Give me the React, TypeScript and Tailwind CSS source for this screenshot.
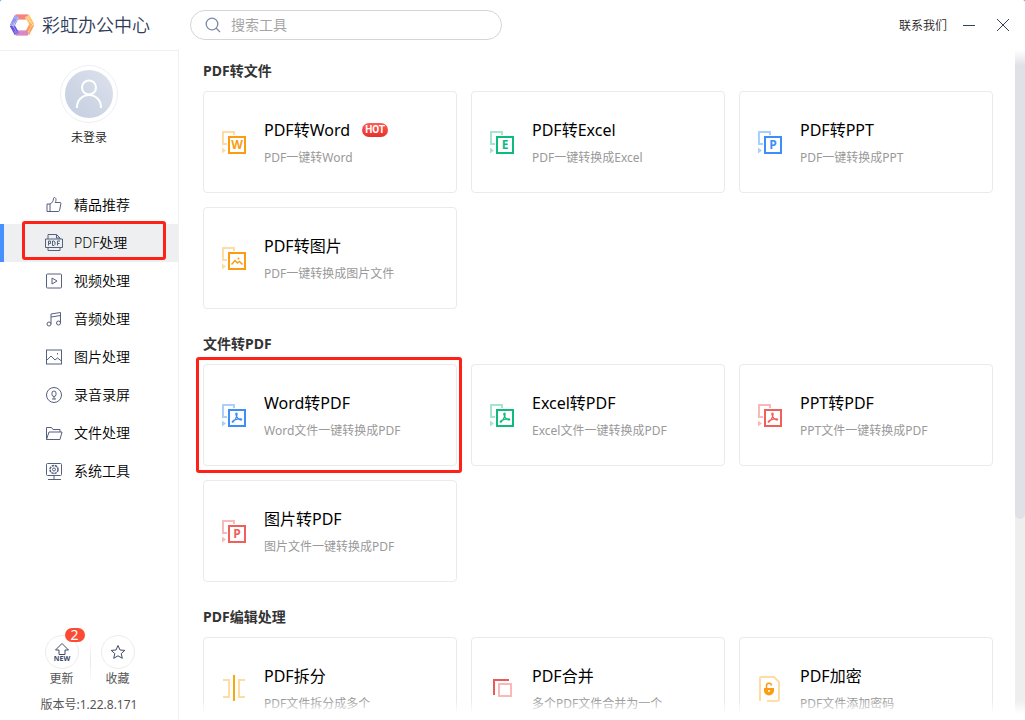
import { useState } from "react";
import type { ReactNode } from "react";

type Tone = "orange" | "green" | "blue" | "red";

interface Tool {
    title: string;
    desc: string;
    icon: ReactNode;
    hot?: boolean;
    marked?: boolean;
}

interface Section {
    title: string;
    tools: Tool[];
}

const tones: Record<Tone, { main: string; light: string }> = {
    orange: { main: "#fb9d14", light: "#ffdca3" },
    green: { main: "#0fbb7c", light: "#a4e6cc" },
    blue: { main: "#3d8ff7", light: "#a9cffb" },
    red: { main: "#f0605a", light: "#f9b9b9" },
};

function ConvertIcon({ tone, children }: { tone: Tone; children: ReactNode }) {
    const { main, light } = tones[tone];
    return (
        <svg width="24" height="24" viewBox="0 0 24 24" fill="none">
            <path d="M5 13H1V1h11v3" stroke={light} strokeWidth="2" />
            <path d="M0 16.500l4 3-4 3z" fill={light} />
            <rect x="7" y="6" width="16" height="16" fill="#fff" stroke={main} strokeWidth="2" />
            {children}
        </svg>
    );
}

function LetterIcon({ tone, letter }: { tone: Tone; letter: string }) {
    return (
        <ConvertIcon tone={tone}>
            <text
                x="15"
                y="18"
                textAnchor="middle"
                fill={tones[tone].main}
                className="font-['Open_Sans',sans-serif] text-[12px] font-bold"
            >
                {letter}
            </text>
        </ConvertIcon>
    );
}

function PdfIcon({ tone }: { tone: Tone }) {
    return (
        <ConvertIcon tone={tone}>
            <path
                d="M14.500 9c.9 0 .7 1.800.1 3.400-.7 1.900-2.200 4.300-3.400 5.500-.6.600-1.200.3-.9-.3.600-1.200 3.200-2.100 5.400-2.500 1.800-.3 4-.4 4 .4 0 .9-2.200.4-3.400-.7-1.200-1-2.300-3.400-2.500-4.700-.1-.7.200-1.100.7-1.100z"
                stroke={tones[tone].main}
                strokeWidth="1.200"
            />
        </ConvertIcon>
    );
}

function PhotoIcon({ tone }: { tone: Tone }) {
    return (
        <ConvertIcon tone={tone}>
            <path d="M9.500 17.500l3.500-4 2.500 2.500 2-1.500 3 3" stroke={tones[tone].main} strokeWidth="1.500" />
            <circle cx="16.500" cy="11.500" r="1" fill={tones[tone].main} />
        </ConvertIcon>
    );
}

function SplitIcon() {
    return (
        <svg width="24" height="28" viewBox="0 0 24 28" fill="none">
            <path d="M1 5h6v17H1M23 5h-6v17h6" stroke="#ffdca3" strokeWidth="2" />
            <path d="M12 0v26" stroke="#f7a90c" strokeWidth="2" />
        </svg>
    );
}

function MergeIcon() {
    return (
        <svg width="24" height="24" viewBox="0 0 24 24" fill="none">
            <path d="M4 18V3h15" stroke="#ed5a56" strokeWidth="2" />
            <rect x="9" y="7" width="12" height="12" stroke="#f9b9b9" strokeWidth="2" />
        </svg>
    );
}

function LockIcon() {
    return (
        <svg width="24" height="26" viewBox="0 0 24 26" fill="none">
            <path d="M2 25V2a1 1 0 0 1 1-1h13l5 5v18a1 1 0 0 1-1 1H9" stroke="#ffdca3" strokeWidth="2" />
            <path d="M6 12h10v2.500a5 5 0 0 1-10 0z" fill="#fb9d14" />
            <path d="M8.500 12.500V10a2.500 2.500 0 0 1 5-.500" stroke="#fb9d14" strokeWidth="1.500" />
            <path d="M11 14v2" stroke="#fff" strokeWidth="1.500" />
        </svg>
    );
}

const sections: Section[] = [
    {
        title: "PDF转文件",
        tools: [
            { title: "PDF转Word", desc: "PDF一键转Word", icon: <LetterIcon tone="orange" letter="W" />, hot: true },
            { title: "PDF转Excel", desc: "PDF一键转换成Excel", icon: <LetterIcon tone="green" letter="E" /> },
            { title: "PDF转PPT", desc: "PDF一键转换成PPT", icon: <LetterIcon tone="blue" letter="P" /> },
            { title: "PDF转图片", desc: "PDF一键转换成图片文件", icon: <PhotoIcon tone="orange" /> },
        ],
    },
    {
        title: "文件转PDF",
        tools: [
            { title: "Word转PDF", desc: "Word文件一键转换成PDF", icon: <PdfIcon tone="blue" />, marked: true },
            { title: "Excel转PDF", desc: "Excel文件一键转换成PDF", icon: <PdfIcon tone="green" /> },
            { title: "PPT转PDF", desc: "PPT文件一键转换成PDF", icon: <PdfIcon tone="red" /> },
            { title: "图片转PDF", desc: "图片文件一键转换成PDF", icon: <LetterIcon tone="red" letter="P" /> },
        ],
    },
    {
        title: "PDF编辑处理",
        tools: [
            { title: "PDF拆分", desc: "PDF文件拆分成多个", icon: <SplitIcon /> },
            { title: "PDF合并", desc: "多个PDF文件合并为一个", icon: <MergeIcon /> },
            { title: "PDF加密", desc: "PDF文件添加密码", icon: <LockIcon /> },
        ],
    },
];

const menu: { label: string; icon: ReactNode }[] = [
    {
        label: "精品推荐",
        icon: <path d="M2 8h3v7.500H2zM5 8c2-.8 3.500-3 3.500-5.500C8.500 1 11 1.300 11 3.500c0 1.300-.4 2.500-.8 3H15c.7 0 1 .5.900 1.100l-1.300 6.700c-.2.800-.6 1.200-1.400 1.200H5" />,
    },
    {
        label: "PDF处理",
        icon: (
            <>
                <path d="M3 5V.5h8.500L15 4v1M11.500.5V4H15M3 13.500v3h12v-3M.5 5h17v8.500H.5z" />
                <path d="M3.500 11.500V7h2v2.500h-2M7.500 7v4.500H9l1-1V8L9 7zM12.500 11.500V7H15M12.500 9.500h2" />
            </>
        ),
    },
    {
        label: "视频处理",
        icon: (
            <>
                <rect x="1.500" y="2" width="15" height="14" rx="1" />
                <path d="M7 6v6l5-3z" />
            </>
        ),
    },
    {
        label: "音频处理",
        icon: (
            <>
                <circle cx="4" cy="14" r="2" />
                <circle cx="13.500" cy="13" r="2" />
                <path d="M6 14V4l9.500-1.500V13M6 7l9.500-1.500" />
            </>
        ),
    },
    {
        label: "图片处理",
        icon: (
            <>
                <rect x="1.500" y="2" width="15" height="14" />
                <path d="M2 12l4-4 4 4 2.500-2 4 3M12.500 5v1.500" />
            </>
        ),
    },
    {
        label: "录音录屏",
        icon: (
            <>
                <circle cx="9" cy="9" r="7.500" />
                <path d="M7 8.500V7a2 2 0 0 1 4 0v1.500a2 2 0 0 1-4 0zM9 10.500V13M7 13h4" />
            </>
        ),
    },
    {
        label: "文件处理",
        icon: <path d="M1.500 15.500v-12h5l1.500 2h7v2.500M1.500 15.500L4 8h13l-2 7.500z" />,
    },
    {
        label: "系统工具",
        icon: (
            <>
                <rect x="1.500" y="1.500" width="15" height="12" rx="1" />
                <path d="M9 13.500v4M3 17.500h13" />
                <circle cx="9" cy="7.500" r="4" strokeWidth="1.500" strokeDasharray="2.500 .7" />
                <circle cx="9" cy="7.500" r="1.500" />
            </>
        ),
    },
];

function Logo() {
    return (
        <svg width="24" height="24" viewBox="0 0 24 24" fill="none" strokeWidth="5">
            <path d="M5.500 4h13" stroke="#f4645d" />
            <path d="M17 3l5 9" stroke="#ffc46b" />
            <path d="M22 11l-5 10" stroke="#ff9d55" />
            <path d="M18 20H6" stroke="#cf6bb4" />
            <path d="M7 21L2 12" stroke="#6a55dc" />
            <path d="M2 13l5-10" stroke="#8f93ea" />
            <path
                d="M5 3h14M4 5h16M4 19h16M5 21h14M1 10l5 8M3 9l5 8M18 5l5 8M16 6l5 8M8 5l-5 8M23 11l-5 8"
                stroke="#fff"
                strokeOpacity=".4"
                strokeWidth="1"
            />
        </svg>
    );
}

function ToolCard({ tool }: { tool: Tool }) {
    return (
        <button className="relative flex h-[102px] items-start rounded border border-[#e9eaeb] px-[18px] pt-[26px] text-left">
            <span className="mt-[3px] flex h-[44px] w-6 shrink-0 items-center">{tool.icon}</span>
            <span className="ml-[18px] min-w-0">
                <span className="flex items-center gap-3 text-base leading-6 text-black">
                    {tool.title}
                    {tool.hot && (
                        <span className="w-[26px] rounded-full bg-linear-to-b from-[#ff5a55] to-[#e4302b] text-center font-['Roboto',sans-serif] text-[10px] leading-[14px] font-bold text-white">
                            HOT
                        </span>
                    )}
                </span>
                <span className="mt-1 block text-xs leading-6 text-[#999]">{tool.desc}</span>
            </span>
            {tool.marked && (
                <span className="pointer-events-none absolute -top-2 -right-1.5 -bottom-2 -left-2 rounded-[3px] border-3 border-[#fd2117]" />
            )}
        </button>
    );
}

export default function App() {
    const [active, setActive] = useState("PDF处理");
    const [keyword, setKeyword] = useState("");

    return (
        <div className="h-screen bg-[#3c9be8] font-['Noto_Sans','Noto_Sans_CJK_SC',sans-serif]">
            <div className="flex h-full rounded-t-xs bg-white">
                <aside className="flex w-[179px] shrink-0 flex-col">
                    <div className="flex h-[51px] items-center gap-2 border-b border-[#f0f0f1] pl-2.5">
                        <Logo />
                        <h1 className="text-lg leading-6 font-[350] text-[#2f3b59]">彩虹办公中心</h1>
                    </div>

                    <div className="flex flex-1 flex-col border-r border-[#f0f0f1] pt-[14px]">
                        <button className="flex flex-col items-center text-xs leading-5 font-[350] text-[#222]">
                            <span className="mb-[5px] flex size-[58px] items-center justify-center rounded-full border border-[#eceff7]">
                                <span className="flex size-12 items-center justify-center rounded-full bg-linear-to-bl from-[#dde1ec] to-[#c3cedf]">
                                    <svg width="28" height="30" viewBox="0 0 28 30" fill="none" stroke="#fff" strokeWidth="2">
                                        <circle cx="14" cy="8.500" r="7" />
                                        <path d="M2 29v-1a12 12 0 0 1 24 0v1" />
                                    </svg>
                                </span>
                            </span>
                            未登录
                        </button>

                        <nav className="mt-[38px] flex flex-col">
                            {menu.map((item) => (
                                <button
                                    key={item.label}
                                    onClick={() => setActive(item.label)}
                                    className={`relative flex h-[38px] items-center gap-[11px] border-l-4 pl-[41px] text-sm font-[350] text-black ${item.label === active
                                            ? "border-[#4590fc] bg-[#eeeff1]"
                                            : "border-transparent"
                                        }`}
                                >
                                    <svg width="18" height="18" viewBox="0 0 18 18" fill="none" stroke="#55617f">
                                        {item.icon}
                                    </svg>
                                    {item.label}
                                    {item.label === active && (
                                        <span className="pointer-events-none absolute -top-[3px] right-3 bottom-0.5 left-[18px] rounded-[3px] border-3 border-[#fd2117]" />
                                    )}
                                </button>
                            ))}
                        </nav>

                        <div className="mt-auto flex items-start justify-center pl-px text-xs leading-5 text-[#555]">
                            <button className="relative flex w-14 flex-col items-center">
                                <span className="flex size-[34px] items-center justify-center rounded-full border border-[#ebecee]">
                                    <svg width="18" height="20" viewBox="0 0 18 20" fill="none" stroke="#3f4b6b">
                                        <path d="M6 12.500V8H2.500L9 1.500 15.500 8H12v4.500z" />
                                        <text x="9" y="19" textAnchor="middle" fill="#3f4b6b" stroke="none" className="text-[7px] font-bold">
                                            NEW
                                        </text>
                                    </svg>
                                </span>
                                <span>更新</span>
                                <span className="absolute -top-[7px] right-[5px] w-5 rounded-full bg-[#fb4b35] text-center text-sm leading-[14px] text-white">
                                    2
                                </span>
                            </button>
                            <span className="mt-1 -mr-px h-11 w-px bg-linear-to-b from-white via-[#e6e7ea] to-white" />
                            <button className="flex w-14 flex-col items-center">
                                <span className="flex size-[34px] items-center justify-center rounded-full border border-[#ebecee]">
                                    <svg width="16" height="16" viewBox="0 0 16 16" fill="none" stroke="#3f4b6b">
                                        <path d="M8 1.500l2 4.500 4.800.4-3.600 3.200 1.100 4.700L8 11.800l-4.300 2.500 1.100-4.700L1.200 6.400 6 6z" />
                                    </svg>
                                </span>
                                <span>收藏</span>
                            </button>
                        </div>
                        <p className="mt-1.5 pb-[5px] text-center text-xs leading-5 text-[#555]">版本号:1.22.8.171</p>
                    </div>
                </aside>

                <div className="flex min-w-0 flex-1 flex-col">
                    <header className="flex h-[50px] shrink-0 items-center pr-2.5 pl-[11px]">
                        <label className="flex h-[30px] w-[312px] items-center gap-2.5 rounded-full border border-[#d4d5d8] pl-[14px]">
                            <svg width="16" height="16" viewBox="0 0 16 16" fill="none" stroke="#7c89a6" strokeWidth="1.300">
                                <circle cx="7" cy="7" r="5.800" />
                                <path d="M11 11l4 4" />
                            </svg>
                            <input
                                type="text"
                                aria-label="搜索工具"
                                placeholder="搜索工具"
                                value={keyword}
                                onChange={(e) => setKeyword(e.target.value)}
                                className="min-w-0 flex-1 text-sm outline-none placeholder:text-[#a5a5a5]"
                            />
                        </label>
                        <a href="#" className="mr-[10px] ml-auto pt-0.5 text-xs leading-5 font-[350] text-[#222]">
                            联系我们
                        </a>
                        <button aria-label="最小化" className="flex h-6 w-6 items-center justify-center">
                            <svg width="12" height="12" viewBox="0 0 12 12" stroke="#35405a">
                                <path d="M0 6.500h12" />
                            </svg>
                        </button>
                        <button aria-label="关闭" className="ml-[10px] flex h-6 w-6 items-center justify-center">
                            <svg width="12" height="12" viewBox="0 0 12 12" stroke="#35405a">
                                <path d="M0 0l12 12M12 0L0 12" />
                            </svg>
                        </button>
                    </header>

                    <div className="relative flex min-h-0 flex-1">
                        <main className="flex flex-1 flex-col gap-[25px] overflow-y-auto pt-[11px] pr-[22px] pl-6 [scrollbar-width:none]">
                            {sections.map((section) => (
                                <section key={section.title}>
                                    <h2 className="mb-2.5 text-sm leading-5 font-bold text-[#333]">{section.title}</h2>
                                    <div className="grid grid-cols-3 gap-[14px]">
                                        {section.tools.map((tool) => (
                                            <ToolCard key={tool.title} tool={tool} />
                                        ))}
                                    </div>
                                </section>
                            ))}
                        </main>
                        <div className="w-2.5 bg-[#eeeeee]">
                            <div className="h-[70%] rounded-b-full bg-[#e0e1e6]" />
                        </div>
                        {/* soft edges of the scroll area */}
                        <div className="pointer-events-none absolute inset-x-0 top-0 h-4 bg-linear-to-b from-white to-transparent" />
                        <div className="pointer-events-none absolute inset-x-0 bottom-0 h-5 bg-linear-to-t from-white from-30% to-transparent" />
                    </div>
                </div>
            </div>
        </div>
    );
}
